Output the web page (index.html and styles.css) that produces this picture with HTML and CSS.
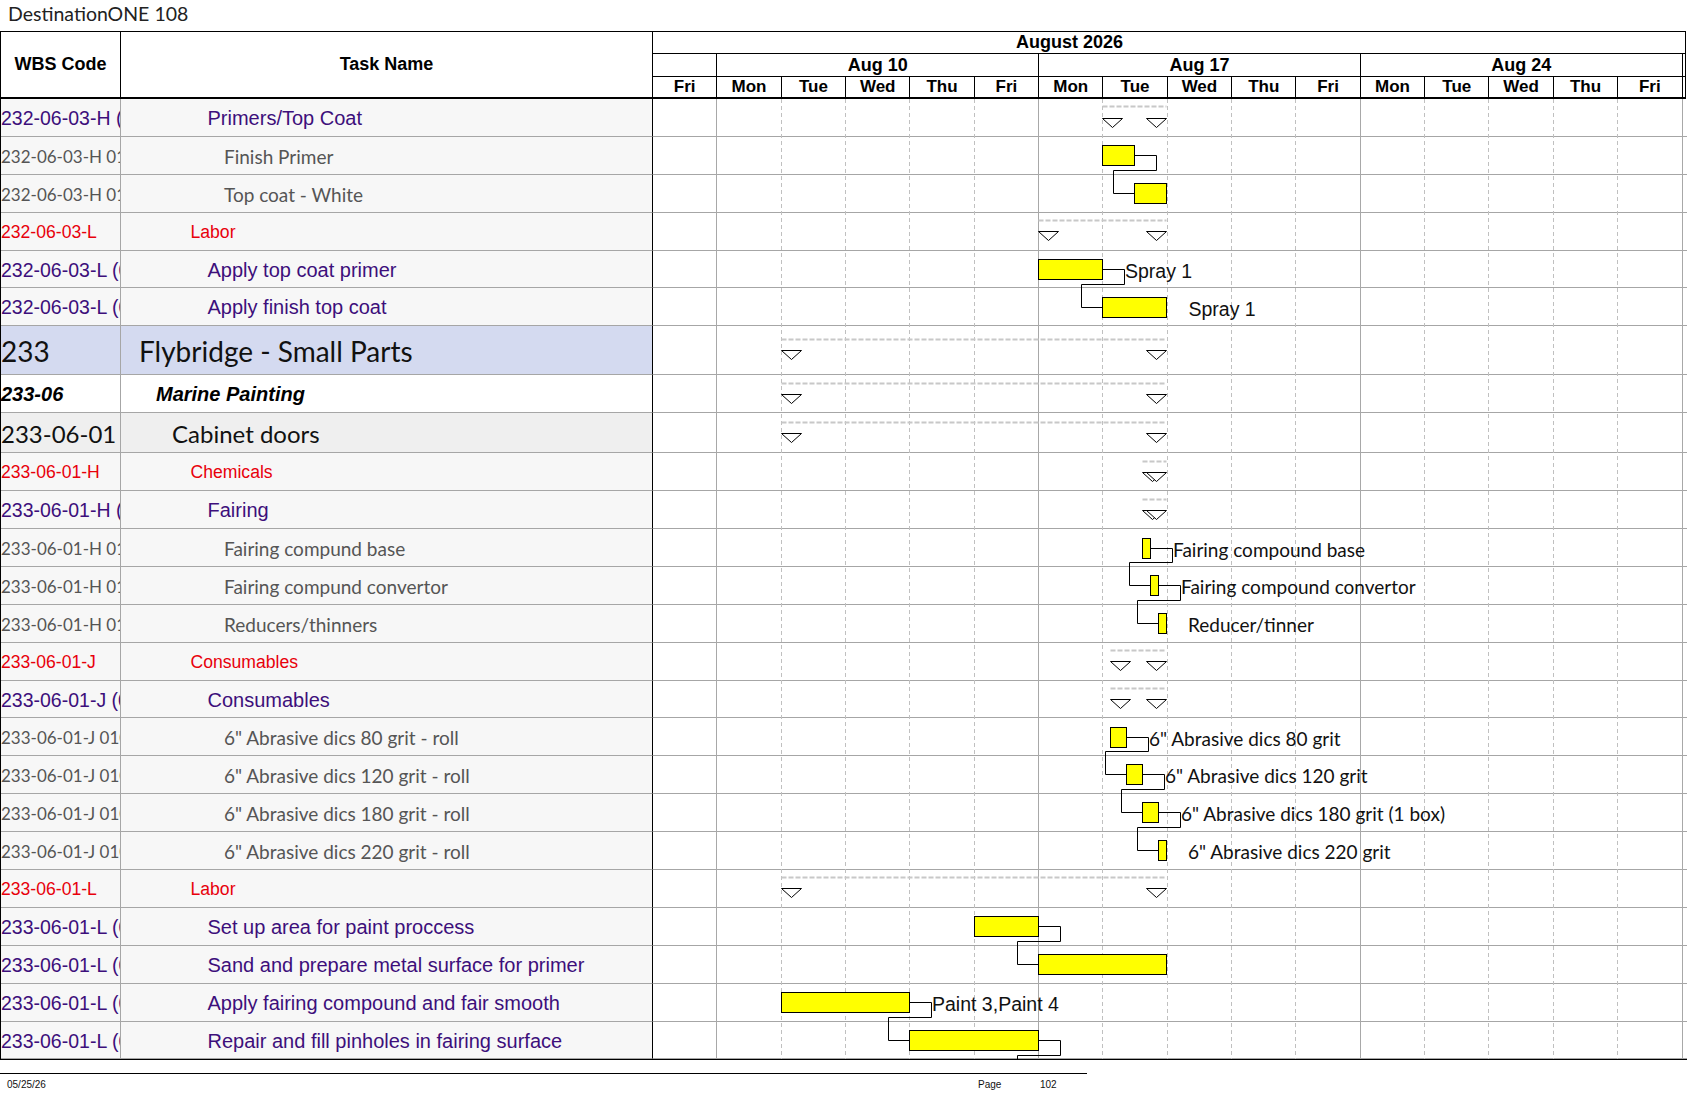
FILE: index.html
```html
<!DOCTYPE html>
<html lang="en">
<head>
<meta charset="utf-8">
<title>DestinationONE 108</title>
<link rel="stylesheet" href="styles.css">
</head>
<body>
<div class="title">DestinationONE 108</div>
<div class="sheet">
  <div class="head">
    <div class="h-wbs">WBS Code</div>
    <div class="h-task">Task Name</div>
    <div class="h-gantt">
      <div class="h-month">August 2026</div>
      <div class="h-weeks">
        <div class="wk wk1"></div>
        <div class="wk wk5">Aug 10</div>
        <div class="wk wk5">Aug 17</div>
        <div class="wk wk5">Aug 24</div>
      </div>
      <div class="h-days">
        <div class="dy">Fri</div><div class="dy">Mon</div><div class="dy">Tue</div><div class="dy">Wed</div><div class="dy">Thu</div><div class="dy">Fri</div>
        <div class="dy">Mon</div><div class="dy">Tue</div><div class="dy">Wed</div><div class="dy">Thu</div><div class="dy">Fri</div>
        <div class="dy">Mon</div><div class="dy">Tue</div><div class="dy">Wed</div><div class="dy">Thu</div><div class="dy">Fri</div>
      </div>
    </div>
  </div>

  <div class="body">
    <div class="row r-p"><div class="wbs">232-06-03-H (01)</div><div class="task i5">Primers/Top Coat</div><div class="gc"></div></div>
    <div class="row r-g"><div class="wbs">232-06-03-H 0101</div><div class="task i6">Finish Primer</div><div class="gc"></div></div>
    <div class="row r-g"><div class="wbs">232-06-03-H 0102</div><div class="task i6">Top coat - White</div><div class="gc"></div></div>
    <div class="row r-r"><div class="wbs">232-06-03-L</div><div class="task i4">Labor</div><div class="gc"></div></div>
    <div class="row r-p"><div class="wbs">232-06-03-L (01)</div><div class="task i5">Apply top coat primer</div><div class="gc"></div></div>
    <div class="row r-p"><div class="wbs">232-06-03-L (02)</div><div class="task i5">Apply finish top coat</div><div class="gc"></div></div>
    <div class="row r-1"><div class="wbs">233</div><div class="task i1">Flybridge - Small Parts</div><div class="gc"></div></div>
    <div class="row r-2"><div class="wbs">233-06</div><div class="task i2">Marine Painting</div><div class="gc"></div></div>
    <div class="row r-3"><div class="wbs">233-06-01</div><div class="task i3">Cabinet doors</div><div class="gc"></div></div>
    <div class="row r-r"><div class="wbs">233-06-01-H</div><div class="task i4">Chemicals</div><div class="gc"></div></div>
    <div class="row r-p"><div class="wbs">233-06-01-H (01)</div><div class="task i5">Fairing</div><div class="gc"></div></div>
    <div class="row r-g"><div class="wbs">233-06-01-H 0101</div><div class="task i6">Fairing compund base</div><div class="gc"></div></div>
    <div class="row r-g"><div class="wbs">233-06-01-H 0102</div><div class="task i6">Fairing compund convertor</div><div class="gc"></div></div>
    <div class="row r-g"><div class="wbs">233-06-01-H 0103</div><div class="task i6">Reducers/thinners</div><div class="gc"></div></div>
    <div class="row r-r"><div class="wbs">233-06-01-J</div><div class="task i4">Consumables</div><div class="gc"></div></div>
    <div class="row r-p"><div class="wbs">233-06-01-J (01)</div><div class="task i5">Consumables</div><div class="gc"></div></div>
    <div class="row r-g"><div class="wbs">233-06-01-J 0101</div><div class="task i6">6" Abrasive dics 80 grit - roll</div><div class="gc"></div></div>
    <div class="row r-g"><div class="wbs">233-06-01-J 0102</div><div class="task i6">6" Abrasive dics 120 grit - roll</div><div class="gc"></div></div>
    <div class="row r-g"><div class="wbs">233-06-01-J 0103</div><div class="task i6">6" Abrasive dics 180 grit - roll</div><div class="gc"></div></div>
    <div class="row r-g"><div class="wbs">233-06-01-J 0104</div><div class="task i6">6" Abrasive dics 220 grit - roll</div><div class="gc"></div></div>
    <div class="row r-r"><div class="wbs">233-06-01-L</div><div class="task i4">Labor</div><div class="gc"></div></div>
    <div class="row r-p"><div class="wbs">233-06-01-L (01)</div><div class="task i5">Set up area for paint proccess</div><div class="gc"></div></div>
    <div class="row r-p"><div class="wbs">233-06-01-L (02)</div><div class="task i5">Sand and prepare metal surface for primer</div><div class="gc"></div></div>
    <div class="row r-p"><div class="wbs">233-06-01-L (03)</div><div class="task i5">Apply fairing compound and fair smooth</div><div class="gc"></div></div>
    <div class="row r-p"><div class="wbs">233-06-01-L (04)</div><div class="task i5">Repair and fill pinholes in fairing surface</div><div class="gc"></div></div>

    <svg class="chart" width="1034" height="960" viewBox="0 0 1034 960" xmlns="http://www.w3.org/2000/svg">
      <g class="grid-s">
        <line x1="63.5" y1="0" x2="63.5" y2="960"/>
        <line x1="385.5" y1="0" x2="385.5" y2="960"/>
        <line x1="707.5" y1="0" x2="707.5" y2="960"/>
        <line x1="1029.5" y1="0" x2="1029.5" y2="960"/>
      </g>
      <g class="grid-d">
        <line x1="128.5" y1="0" x2="128.5" y2="960"/>
        <line x1="192.5" y1="0" x2="192.5" y2="960"/>
        <line x1="256.5" y1="0" x2="256.5" y2="960"/>
        <line x1="321.5" y1="0" x2="321.5" y2="960"/>
        <line x1="449.5" y1="0" x2="449.5" y2="960"/>
        <line x1="514.5" y1="0" x2="514.5" y2="960"/>
        <line x1="578.5" y1="0" x2="578.5" y2="960"/>
        <line x1="642.5" y1="0" x2="642.5" y2="960"/>
        <line x1="771.5" y1="0" x2="771.5" y2="960"/>
        <line x1="835.5" y1="0" x2="835.5" y2="960"/>
        <line x1="900.5" y1="0" x2="900.5" y2="960"/>
        <line x1="964.5" y1="0" x2="964.5" y2="960"/>
      </g>

      <!-- summary dashed spans -->
      <g class="sum">
        <line x1="449.5" y1="7.5" x2="513.5" y2="7.5"/>
        <line x1="385.5" y1="121.5" x2="513.5" y2="121.5"/>
        <line x1="128.5" y1="240.5" x2="513.5" y2="240.5"/>
        <line x1="128.5" y1="284.5" x2="513.5" y2="284.5"/>
        <line x1="128.5" y1="323.5" x2="513.5" y2="323.5"/>
        <line x1="489.5" y1="362.5" x2="513.5" y2="362.5"/>
        <line x1="489.5" y1="400.5" x2="513.5" y2="400.5"/>
        <line x1="457.5" y1="551.5" x2="513.5" y2="551.5"/>
        <line x1="457.5" y1="589.5" x2="513.5" y2="589.5"/>
        <line x1="128.5" y1="778.5" x2="513.5" y2="778.5"/>
      </g>

      <!-- summary end markers -->
      <g class="tri">
        <polygon points="449.5,19.5 469.5,19.5 459.5,28.5"/>
        <polygon points="493.5,19.5 513.5,19.5 503.5,28.5"/>
        <polygon points="385.5,132.5 405.5,132.5 395.5,141.5"/>
        <polygon points="493.5,132.5 513.5,132.5 503.5,141.5"/>
        <polygon points="128.5,251.5 148.5,251.5 138.5,260.5"/>
        <polygon points="493.5,251.5 513.5,251.5 503.5,260.5"/>
        <polygon points="128.5,295.5 148.5,295.5 138.5,304.5"/>
        <polygon points="493.5,295.5 513.5,295.5 503.5,304.5"/>
        <polygon points="128.5,334.5 148.5,334.5 138.5,343.5"/>
        <polygon points="493.5,334.5 513.5,334.5 503.5,343.5"/>
        <polygon points="489.5,373.5 509.5,373.5 499.5,382.5"/>
        <polygon points="493.5,373.5 513.5,373.5 503.5,382.5"/>
        <polygon points="489.5,411.5 509.5,411.5 499.5,420.5"/>
        <polygon points="493.5,411.5 513.5,411.5 503.5,420.5"/>
        <polygon points="457.5,562.5 477.5,562.5 467.5,571.5"/>
        <polygon points="493.5,562.5 513.5,562.5 503.5,571.5"/>
        <polygon points="457.5,600.5 477.5,600.5 467.5,609.5"/>
        <polygon points="493.5,600.5 513.5,600.5 503.5,609.5"/>
        <polygon points="128.5,789.5 148.5,789.5 138.5,798.5"/>
        <polygon points="493.5,789.5 513.5,789.5 503.5,798.5"/>
      </g>

      <!-- dependency links -->
      <g class="lnk">
        <polyline points="481.5,56.5 503.5,56.5 503.5,71.5 460.5,71.5 460.5,94.5 481.5,94.5"/>
        <polyline points="449.5,170.5 471.5,170.5 471.5,185.5 428.5,185.5 428.5,208.5 449.5,208.5"/>
        <polyline points="497.5,449.5 519.5,449.5 519.5,463.5 476.5,463.5 476.5,486.5 497.5,486.5"/>
        <polyline points="505.5,486.5 527.5,486.5 527.5,501.5 484.5,501.5 484.5,524.5 505.5,524.5"/>
        <polyline points="473.5,638.5 495.5,638.5 495.5,652.5 452.5,652.5 452.5,675.5 473.5,675.5"/>
        <polyline points="489.5,675.5 511.5,675.5 511.5,690.5 468.5,690.5 468.5,713.5 489.5,713.5"/>
        <polyline points="505.5,713.5 527.5,713.5 527.5,728.5 484.5,728.5 484.5,751.5 505.5,751.5"/>
        <polyline points="385.5,827.5 407.5,827.5 407.5,842.5 364.5,842.5 364.5,865.5 385.5,865.5"/>
        <polyline points="256.5,903.5 278.5,903.5 278.5,918.5 235.5,918.5 235.5,941.5 256.5,941.5"/>
        <polyline points="385.5,941.5 407.5,941.5 407.5,956.5 364.5,956.5 364.5,962"/>
      </g>

      <!-- task bars -->
      <g class="bar">
        <rect x="449.5" y="46.5" width="32" height="20"/>
        <rect x="481.5" y="84.5" width="32" height="20"/>
        <rect x="385.5" y="160.5" width="64" height="20"/>
        <rect x="449.5" y="198.5" width="64" height="20"/>
        <rect x="489.5" y="439.5" width="8" height="20"/>
        <rect x="497.5" y="476.5" width="8" height="20"/>
        <rect x="505.5" y="514.5" width="8" height="20"/>
        <rect x="457.5" y="628.5" width="16" height="20"/>
        <rect x="473.5" y="665.5" width="16" height="20"/>
        <rect x="489.5" y="703.5" width="16" height="20"/>
        <rect x="505.5" y="741.5" width="8" height="20"/>
        <rect x="321.5" y="817.5" width="64" height="20"/>
        <rect x="385.5" y="855.5" width="128" height="20"/>
        <rect x="128.5" y="893.5" width="128" height="20"/>
        <rect x="256.5" y="931.5" width="129" height="20"/>
      </g>

      <!-- bar labels -->
      <text class="lbl-a" x="472" y="178.5">Spray 1</text>
      <text class="lbl-a" x="535.5" y="216.5">Spray 1</text>
      <text class="lbl-c" x="520" y="457.5">Fairing compound base</text>
      <text class="lbl-c" x="528" y="494.5">Fairing compound convertor</text>
      <text class="lbl-c" x="535" y="532.5">Reducer/tinner</text>
      <text class="lbl-c" x="496" y="646.5">6" Abrasive dics 80 grit</text>
      <text class="lbl-c" x="512" y="683.5">6" Abrasive dics 120 grit</text>
      <text class="lbl-c" x="528" y="721.5">6" Abrasive dics 180 grit (1 box)</text>
      <text class="lbl-c" x="535" y="759.5">6" Abrasive dics 220 grit</text>
      <text class="lbl-a" x="279" y="911.5">Paint 3,Paint 4</text>
    </svg>
  </div>
</div>

<div class="footer">
  <span class="f-date">05/25/26</span>
  <span class="f-page">Page</span>
  <span class="f-num">102</span>
</div>
</body>
</html>
```

FILE: styles.css
```css
html, body {
  margin: 0;
  padding: 0;
  background: #ffffff;
}

body {
  width: 1687px;
  font-family: "Liberation Sans", Arial, sans-serif;
  color: #000;
}

.title {
  height: 31px;
  line-height: 28px;
  padding-left: 8px;
  box-sizing: border-box;
  font-family: Lato, "Noto Sans", sans-serif;
  font-size: 19.5px;
  color: #222;
}

/* ---------- header ---------- */
.head {
  display: flex;
  width: 1686px;
  height: 68px;
  box-sizing: border-box;
  border: 1px solid #000;
  border-bottom-width: 2px;
  font-weight: bold;
}

.h-wbs, .h-task {
  box-sizing: border-box;
  border-right: 1px solid #000;
  display: flex;
  align-items: center;
  justify-content: center;
  font-size: 18px;
}

.h-wbs { width: 120px; }
.h-task { width: 532px; }

.h-gantt {
  flex: 1;
  display: flex;
  flex-direction: column;
}

.h-month {
  height: 22px;
  box-sizing: border-box;
  border-bottom: 1px solid #000;
  font-size: 18px;
  line-height: 21px;
  padding-left: 363px;
}

.h-weeks {
  height: 23px;
  box-sizing: border-box;
  border-bottom: 1px solid #000;
  display: flex;
}

.wk {
  box-sizing: border-box;
  border-right: 1px solid #000;
  font-size: 18px;
  line-height: 22px;
  text-align: center;
}

.wk1 { width: 64.35px; }
.wk5 { width: 321.75px; }

.h-days {
  flex: 1;
  display: flex;
}

.dy {
  width: 64.35px;
  box-sizing: border-box;
  border-right: 1px solid #000;
  font-size: 17px;
  line-height: 20px;
  text-align: center;
}

/* ---------- body rows ---------- */
.body {
  position: relative;
  width: 1687px;
  box-sizing: border-box;
  border-left: 1px solid #000;
  border-bottom: 1px solid #000;
}

.row {
  display: grid;
  grid-template-columns: 120px 532px 1fr;
  height: 37.9px;
}

.row > div {
  box-sizing: border-box;
  border-bottom: 1px solid #a6a6a6;
  padding-top: 2px;
  display: flex;
  align-items: center;
  white-space: nowrap;
  overflow: hidden;
}

.wbs {
  border-right: 1px solid #a6a6a6;
  background: #f7f7f7;
}

.task {
  border-right: 1px solid #000;
  background: #f7f7f7;
}

.gc { background: #fff; }

.i1 { padding-left: 18px; }
.i2 { padding-left: 35px; }
.i3 { padding-left: 51px; }
.i4 { padding-left: 69.5px; }
.i5 { padding-left: 86.5px; }
.i6 { padding-left: 103px; }

/* purple detail rows */
.r-p .wbs { font-size: 19.5px; color: #3d0f7b; }
.r-p .task { font-size: 20px; color: #3d0f7b; }

/* grey resource rows */
.r-g .wbs,
.r-g .task {
  font-family: Lato, "Noto Sans", sans-serif;
  color: #555;
}
.r-g .wbs { font-size: 17px; }
.r-g .task { font-size: 19px; }

/* red category rows */
.r-r .wbs,
.r-r .task {
  font-size: 17.6px;
  color: #e8000b;
}

/* level 1 */
.row.r-1 { height: 49px; }
.r-1 .wbs,
.r-1 .task {
  font-family: Lato, "Noto Sans", sans-serif;
  font-size: 28px;
  color: #111;
  background: #d4daf0;
}

/* level 2 */
.r-2 .wbs,
.r-2 .task {
  font-size: 20px;
  font-weight: bold;
  font-style: italic;
  background: #fff;
}

/* level 3 */
.row.r-3 { height: 40px; }
.r-3 .wbs,
.r-3 .task {
  font-family: Lato, "Noto Sans", sans-serif;
  font-size: 24px;
  color: #111;
  background: #efefef;
}

/* ---------- gantt drawing ---------- */
.chart {
  position: absolute;
  left: 652px;
  top: 0;
  width: 1034px;
  height: 960px;
  overflow: hidden;
  pointer-events: none;
}

.grid-s line { stroke: #a8a8a8; stroke-width: 1; }
.grid-d line { stroke: #c0c0c0; stroke-width: 1; stroke-dasharray: 4 3; }
.sum line { stroke: #c8c8c8; stroke-width: 2; stroke-dasharray: 5 2; }
.tri polygon { fill: #fff; stroke: #000; stroke-width: 1; }
.lnk polyline { fill: none; stroke: #000; stroke-width: 1; }
.bar rect { fill: #ffff00; stroke: #000; stroke-width: 1; }

.lbl-a {
  font-family: "Liberation Sans", Arial, sans-serif;
  font-size: 19.5px;
  fill: #111;
}

.lbl-c {
  font-family: Lato, "Noto Sans", sans-serif;
  font-size: 19px;
  fill: #111;
}

/* ---------- footer ---------- */
.footer {
  margin-top: 13px;
  width: 1087px;
  box-sizing: border-box;
  border-top: 1px solid #000;
  padding: 5px 0 0 7px;
  display: grid;
  grid-template-columns: 971px 62px auto;
  font-size: 10px;
  line-height: 12px;
  color: #111;
}
```
